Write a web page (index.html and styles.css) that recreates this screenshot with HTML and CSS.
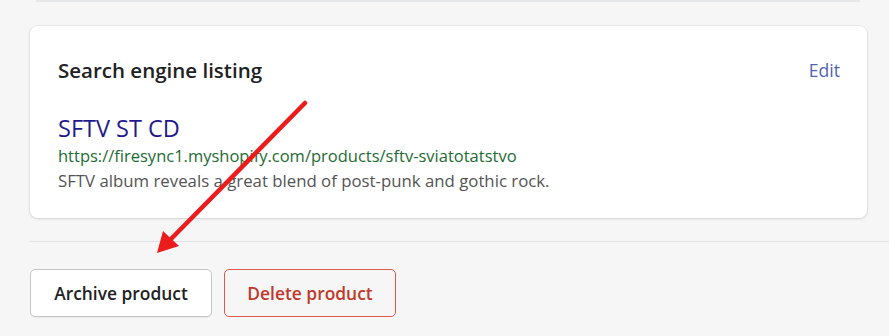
FILE: index.html
```html
<!DOCTYPE html>
<html lang="en">
<head>
<meta charset="utf-8">
<title>Search engine listing</title>
<link rel="stylesheet" href="styles.css">
</head>
<body>
<div class="page">
  <div class="prev-card"></div>
  <section class="card">
    <div class="card-head">
      <h2 class="card-title">Search engine listing</h2>
      <a class="edit" href="#">Edit</a>
    </div>
    <div class="listing">
      <div class="seo-title">SFTV ST CD</div>
      <div class="seo-url">https://firesync1.myshopify.com/products/sftv-sviatotatstvo</div>
      <div class="seo-desc">SFTV album reveals a great blend of post-punk and gothic rock.</div>
    </div>
  </section>
  <hr class="divider">
  <div class="actions">
    <button class="btn btn-archive">Archive product</button>
    <button class="btn btn-delete">Delete product</button>
  </div>
  <svg class="arrow" width="889" height="336" viewBox="0 0 889 336" aria-hidden="true">
    <line x1="305" y1="103" x2="170" y2="240" stroke="#ec1c1c" stroke-width="4.5" stroke-linecap="round"/>
    <polygon points="157,253 163,231 179,246" fill="#ec1c1c"/>
  </svg>
</div>
</body>
</html>
```
FILE: styles.css
```css
html, body {
  margin: 0;
  padding: 0;
  background: #f6f6f7;
}
body {
  font-family: "Open Sans", "Noto Sans", sans-serif;
  color: #212b36;
  width: 889px;
  height: 336px;
  overflow: hidden;
}
.page {
  position: relative;
  width: 889px;
  height: 336px;
}
.prev-card {
  margin-left: 36px;
  width: 824px;
  height: 2px;
  background: #e6e7e9;
}
.card {
  margin: 24px 0 0 30px;
  width: 837px;
  height: 192px;
  box-sizing: border-box;
  background: #fff;
  border-radius: 8px;
  box-shadow: 0 0 0 1px rgba(63,63,68,0.05), 0 1px 3px 0 rgba(63,63,68,0.15);
  padding: 30px 27px 0 28px;
}
.card-head {
  display: flex;
  justify-content: space-between;
  align-items: center;
  height: 28px;
}
.card-title {
  margin: 0;
  font-size: 20.5px;
  font-weight: 600;
  line-height: 28px;
  color: #202223;
}
.edit {
  font-size: 17.6px;
  line-height: 28px;
  color: #5064b4;
  text-decoration: none;
}
.listing {
  margin-top: 29px;
}
.seo-title {
  font-size: 23.5px;
  line-height: 30px;
  color: #1f1a8c;
}
.seo-url {
  font-size: 16.5px;
  line-height: 25px;
  color: #1e6b32;
}
.seo-desc {
  font-size: 16.8px;
  line-height: 25px;
  color: #545454;
}
.divider {
  margin: 23px 0 0 30px;
  border: 0;
  height: 1px;
  background: #dfe1e4;
}
.actions {
  display: flex;
  gap: 12px;
  margin: 27px 0 0 30px;
}
.btn {
  height: 48px;
  box-sizing: border-box;
  border-radius: 5px;
  font-family: inherit;
  font-size: 17.4px;
  font-weight: 600;
  padding: 0;
}
.btn-archive {
  width: 182px;
  background: #fff;
  border: 1px solid #c4c6c9;
  color: #202223;
  box-shadow: 0 1px 0 rgba(0,0,0,0.05);
}
.btn-delete {
  width: 172px;
  background: transparent;
  border: 1px solid #dd5b4c;
  color: #c0392b;
}
.arrow {
  position: absolute;
  left: 0;
  top: 0;
  pointer-events: none;
}
```
